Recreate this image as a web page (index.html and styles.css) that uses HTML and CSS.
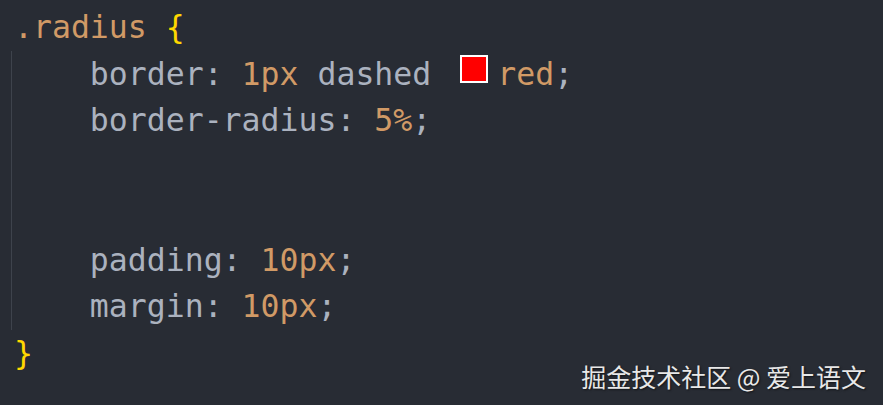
FILE: index.html
```html
<!DOCTYPE html>
<html>
<head>
<meta charset="utf-8">
<link rel="stylesheet" href="styles.css">
</head>
<body>
<div class="editor">
  <div class="line"><span class="sel">.radius</span> <span class="brace">{</span></div>
  <div class="block">
    <div class="line">    <span class="prop">border:</span> <span class="num">1px</span> <span class="prop">dashed</span> <span class="swatch"></span><span class="num">red</span><span class="prop">;</span></div>
    <div class="line">    <span class="prop">border-radius:</span> <span class="num">5%</span><span class="prop">;</span></div>
    <div class="line"> </div>
    <div class="line"> </div>
    <div class="line">    <span class="prop">padding:</span> <span class="num">10px</span><span class="prop">;</span></div>
    <div class="line">    <span class="prop">margin:</span> <span class="num">10px</span><span class="prop">;</span></div>
  </div>
  <div class="line"><span class="brace">}</span></div>
  <div class="watermark">掘金技术社区 @ 爱上语文</div>
</div>
</body>
</html>
```
FILE: styles.css
```css
html, body {
  margin: 0;
  padding: 0;
  background: #282c34;
}
.editor {
  position: relative;
  width: 883px;
  height: 405px;
  box-sizing: border-box;
  padding: 4px 0 0 14px;
  font-family: "DejaVu Sans Mono", monospace;
  font-size: 31.5px;
  color: #abb2bf;
  overflow: hidden;
}
.line {
  height: 46.5px;
  line-height: 46.5px;
  white-space: pre;
}
.block {
  margin-left: -3px;
  padding-left: 2px;
  border-left: 1px solid #3e434c;
}
.sel, .num {
  color: #d19a66;
}
.prop {
  color: #abb2bf;
}
.brace {
  color: #ffd700;
}
.swatch {
  display: inline-block;
  width: 24px;
  height: 24px;
  background: #ff0000;
  border: 2px solid #ffffff;
  margin: 0 9px 0 10px;
  vertical-align: 2px;
}
.watermark {
  position: absolute;
  right: 17px;
  bottom: 14px;
  font-family: "Noto Sans CJK SC", sans-serif;
  font-size: 25px;
  line-height: 30px;
  color: #e8e8e8;
  text-shadow: 1px 1px 2px rgba(0,0,0,0.6);
}
```
